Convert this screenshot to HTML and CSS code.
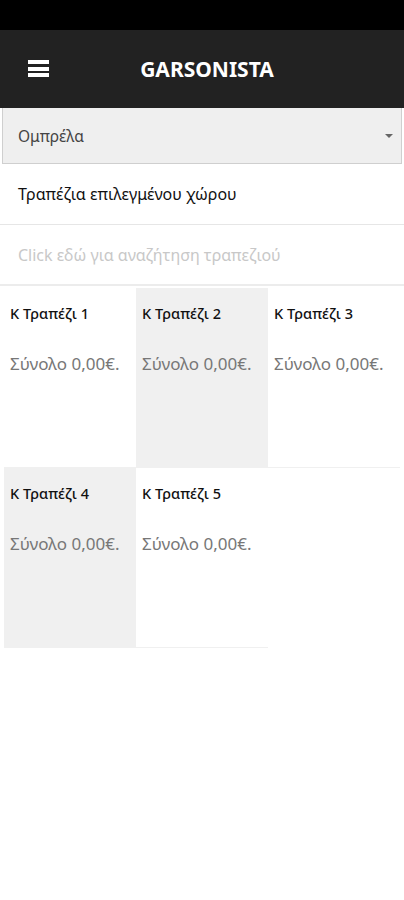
FILE: index.html
```html
<!DOCTYPE html>
<html>
<head>
  <title>Garsonista</title>
  <link rel="stylesheet" href="styles.css">
</head>
<body>
  <div class="status-bar"></div>
  <header class="top-bar">
    <span class="menu-btn">
      <svg width="21" height="18" viewBox="0 0 21 18">
        <rect x="0" y="0" width="21" height="4" fill="#fff"/>
        <rect x="0" y="7" width="21" height="4" fill="#fff"/>
        <rect x="0" y="13" width="21" height="4" fill="#fff"/>
      </svg>
    </span>
    <h1>GARSONISTA</h1>
  </header>
  <div class="area-select">
    <span>Ομπρέλα</span>
    <span class="caret"></span>
  </div>
  <div class="section-title">Τραπέζια επιλεγμένου χώρου</div>
  <div class="search">Click εδώ για αναζήτηση τραπεζιού</div>
  <div class="tables">
    <div class="table">
      <div class="table-name">Κ Τραπέζι 1</div>
      <div class="table-total">Σύνολο 0,00€.</div>
    </div>
    <div class="table alt">
      <div class="table-name">Κ Τραπέζι 2</div>
      <div class="table-total">Σύνολο 0,00€.</div>
    </div>
    <div class="table">
      <div class="table-name">Κ Τραπέζι 3</div>
      <div class="table-total">Σύνολο 0,00€.</div>
    </div>
    <div class="table alt">
      <div class="table-name">Κ Τραπέζι 4</div>
      <div class="table-total">Σύνολο 0,00€.</div>
    </div>
    <div class="table">
      <div class="table-name">Κ Τραπέζι 5</div>
      <div class="table-total">Σύνολο 0,00€.</div>
    </div>
  </div>
</body>
</html>
```

FILE: styles.css
```css
body {
  font-family: "Noto Sans", "Open Sans", sans-serif;
  margin: 0;
  padding: 0;
  background-color: #fff;
  color: #111;
}
.status-bar {
  height: 30px;
  background-color: #000;
}
.top-bar {
  height: 78px;
  background-color: #222;
  display: flex;
  align-items: center;
}
.menu-btn {
  display: flex;
  margin-left: 28px;
}
.top-bar h1 {
  flex: 1;
  margin: 0 0 0 -49px;
  padding-left: 10px;
  text-align: center;
  color: #fff;
  font-size: 21px;
  font-weight: bold;
}
.area-select {
  margin: 0 2px;
  height: 55px;
  background-color: #efefef;
  border: 1px solid #cfcfcf;
  border-top: none;
  display: flex;
  align-items: center;
  justify-content: space-between;
  padding: 0 8px 0 15px;
  font-size: 15.5px;
  color: #444;
}
.caret {
  width: 0;
  height: 0;
  border-left: 4px solid transparent;
  border-right: 4px solid transparent;
  border-top: 4px solid #666;
}
.section-title {
  height: 60px;
  line-height: 60px;
  padding-left: 18px;
  font-size: 16px;
  color: #111;
  border-bottom: 1px solid #e6e6e6;
}
.search {
  height: 59px;
  line-height: 60px;
  padding-left: 18px;
  font-size: 16px;
  color: #c8c8c8;
  border-bottom: 2px solid #ececec;
}
.tables {
  display: grid;
  grid-template-columns: repeat(3, 132px);
  margin: 2px 4px 0;
}
.table {
  height: 180px;
  padding: 15px 6px 0;
  box-sizing: border-box;
  border-bottom: 1px solid #f0f0f0;
}
.table.alt {
  background-color: #f0f0f0;
}
.table-name {
  font-size: 14.5px;
  font-weight: 500;
  color: #111;
}
.table-total {
  margin-top: 29px;
  font-size: 17px;
  color: #777;
}
```
